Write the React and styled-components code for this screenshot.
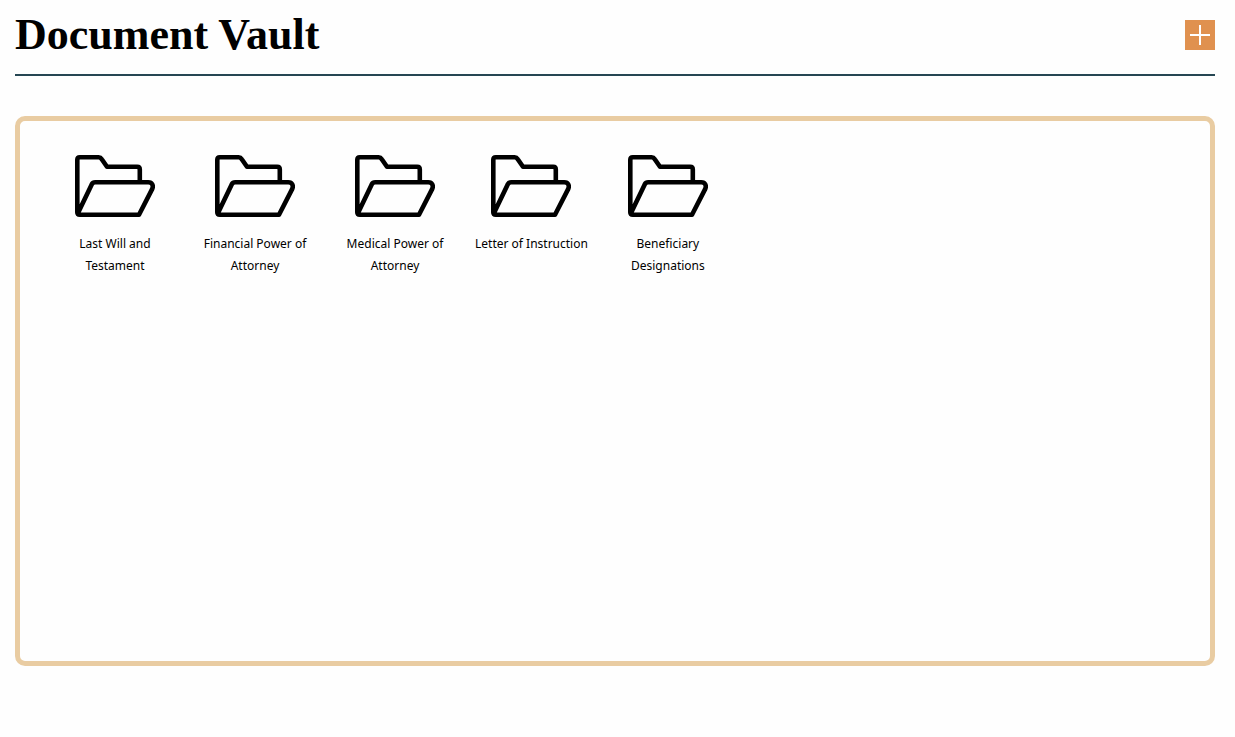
import React from "react";
import styled, { createGlobalStyle } from "styled-components";

const GlobalStyle = createGlobalStyle`
  *, *::before, *::after { box-sizing: border-box; }
  body { margin: 0; background: #fefefe; color: #000; font-family: "Noto Sans", "Open Sans", sans-serif; }
`;

const Page = styled.main`
  padding: 10px 20px 20px 15px;
`;

const Header = styled.header`
  display: flex;
  align-items: center;
  justify-content: space-between;
  height: 66px;
  padding-bottom: 14px;
  border-bottom: 2px solid #264653;
`;

const Title = styled.h1`
  margin: 0;
  font: 700 44px/50px "Liberation Serif", serif;
`;

const AddButton = styled.button`
  display: flex;
  align-items: center;
  justify-content: center;
  width: 30px;
  height: 30px;
  padding: 0;
  border: 0;
  background: #e0914f;
  color: #fff;
  cursor: pointer;
`;

const Vault = styled.ul`
  display: flex;
  flex-wrap: wrap;
  align-items: flex-start;
  align-content: flex-start;
  gap: 20px;
  min-height: 550px;
  margin: 40px 0 0;
  padding: 34px 35px;
  border: 5px solid #e9cca2;
  border-radius: 10px;
  list-style: none;
`;

const Folder = styled.li`
  max-width: 120px;
`;

const FolderLink = styled.a`
  display: flex;
  flex-direction: column;
  align-items: center;
  gap: 16px;
  color: inherit;
  text-decoration: none;
`;

const FolderName = styled.span`
  font-size: 12px;
  line-height: 22px;
  text-align: center;
`;

const folders = [
  "Last Will and Testament",
  "Financial Power of Attorney",
  "Medical Power of Attorney",
  "Letter of Instruction",
  "Beneficiary Designations",
];

function FolderIcon() {
  return (
    <svg width="80" height="62" viewBox="0 0 80 62" fill="none" stroke="#000" strokeWidth="4.6" strokeLinejoin="round" aria-hidden="true">
      <path d="M64.8 27V14.4Q64.8 11.8 62.2 11.8H32L26.8 4.2Q25.6 2.3 23.6 2.3H4.8Q2.3 2.3 2.3 4.8V57.2Q2.3 59.7 4.8 59.7H64L77 34.4C78.8 30.6 77.4 27.3 73.2 27.3H20.2Q17.8 27.3 16.7 29.4L3 58" />
    </svg>
  );
}

function PlusIcon() {
  return (
    <svg width="20" height="20" viewBox="0 0 20 20" stroke="currentColor" strokeWidth="2" aria-hidden="true">
      <path d="M10 0V20M0 10H20" />
    </svg>
  );
}

export default function App() {
  return (
    <>
      <GlobalStyle />
      <Page>
        <Header>
          <Title>Document Vault</Title>
          <AddButton type="button" aria-label="Add folder">
            <PlusIcon />
          </AddButton>
        </Header>
        <Vault>
          {folders.map((name) => (
            <Folder key={name}>
              <FolderLink href="#">
                <FolderIcon />
                <FolderName>{name}</FolderName>
              </FolderLink>
            </Folder>
          ))}
        </Vault>
      </Page>
    </>
  );
}
